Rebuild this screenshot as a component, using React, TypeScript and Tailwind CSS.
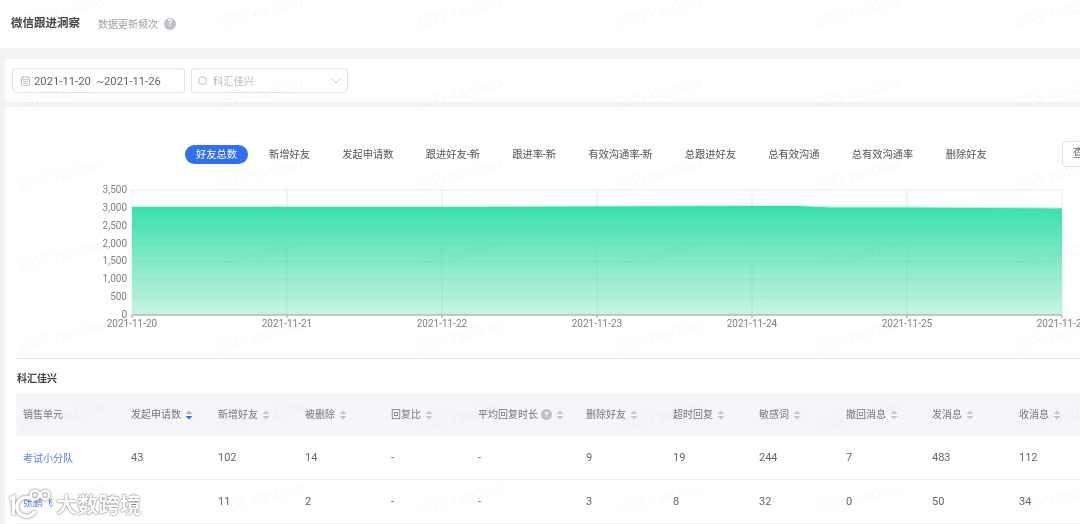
const cols = "grid grid-cols-[108px_87px_87px_86px_87px_108px_87px_86px_87px_86px_87px_87px]";

const tabs = ["新增好友", "发起申请数", "跟进好友-新", "跟进率-新", "有效沟通率-新", "总跟进好友", "总有效沟通", "总有效沟通率", "删除好友"];

const headers = [
  { label: "发起申请数", active: true },
  { label: "新增好友" },
  { label: "被删除" },
  { label: "回复比" },
  { label: "平均回复时长", help: true },
  { label: "删除好友" },
  { label: "超时回复" },
  { label: "敏感词" },
  { label: "撤回消息" },
  { label: "发消息" },
  { label: "收消息" },
];

const rows = [
  ["考试小分队", "43", "102", "14", "-", "-", "9", "19", "244", "7", "483", "112"],
  ["张鹏飞", "5", "11", "2", "-", "-", "3", "8", "32", "0", "50", "34"],
];

const yTicks = [3500, 3000, 2500, 2000, 1500, 1000, 500, 0];
const xTicks = ["2021-11-20", "2021-11-21", "2021-11-22", "2021-11-23", "2021-11-24", "2021-11-25", "2021-11-26"];

function SortIcon({ active }: { active?: boolean }) {
  return (
    <svg width="8" height="10" viewBox="0 0 8 10" className="shrink-0">
      <path d="M4 0.5 7.5 4H0.5z" fill={active ? "#a9b4c8" : "#c4c6cc"} />
      <path d="M4 9.5 7.5 6H0.5z" fill={active ? "#3370ff" : "#c4c6cc"} />
    </svg>
  );
}

function HelpDot({ size }: { size: string }) {
  return (
    <span className={`${size} rounded-full bg-[#c0c0c6] text-white font-bold flex items-center justify-center shrink-0`}>?</span>
  );
}

function AreaChart() {
  const top = 190;
  const bottom = 315;
  const xs = [132, 287, 442, 597, 752, 907, 1062];
  return (
    <svg width="1080" height="145" viewBox="0 184 1080 145" className="block">
      <defs>
        <linearGradient id="area" x1="0" y1="0" x2="0" y2="1">
          <stop offset="0" stopColor="#38e0ad" />
          <stop offset="1" stopColor="#c9f4e0" />
        </linearGradient>
      </defs>
      <rect x="132" y={top} width="930" height="125" fill="none" stroke="#e8ebf2" />
      <path d="M132 206.5 L442 206.5 L597 206 L752 205.5 L797 205.5 L830 207 L907 207 L1062 208 V315 H132 Z" fill="url(#area)" />
      <path d="M132 206.5 L442 206.5 L597 206 L752 205.5 L797 205.5 L830 207 L907 207 L1062 208" fill="none" stroke="#c5f5e4" />
      {yTicks.slice(1, -1).map((t, i) => (
        <line key={t} x1="132" x2="1062" y1={207.9 + i * 17.86} y2={207.9 + i * 17.86} stroke="#2fb98f" strokeOpacity="0.1" />
      ))}
      {xs.slice(1, -1).map((x) => (
        <line key={x} x1={x} x2={x} y1={top} y2={bottom} stroke="#8fb8c0" strokeOpacity="0.3" />
      ))}
      <line x1="132" x2="1062" y1={bottom} y2={bottom} stroke="#b5b8bb" strokeWidth="1.5" />
      {xs.map((x) => (
        <line key={x} x1={x} x2={x} y1={bottom} y2={bottom + 3} stroke="#9a9da1" />
      ))}
      {yTicks.map((t, i) => (
        <text key={t} x="127" y={top + i * 17.86 + 3} textAnchor="end" fontSize="10" fill="#808080">
          {t.toLocaleString("en-US")}
        </text>
      ))}
      {xTicks.map((t, i) => (
        <text key={t} x={xs[i]} y="327" textAnchor="middle" fontSize="10" fill="#808080">
          {t}
        </text>
      ))}
    </svg>
  );
}

export default function App() {
  return (
    <div className="relative h-[524px] w-[1080px] overflow-hidden bg-[#f2f3f5] font-['Roboto','Noto_Sans_CJK_SC',sans-serif] text-[#666] blur-[0.3px]">
      {/* Header */}
      <div className="flex h-[48px] items-center bg-white pl-[11px]">
        <h1 className="text-[11.5px] font-semibold text-[#444]">微信跟进洞察</h1>
        <span className="ml-[18px] text-[10px] text-[#a0a0a0]">数据更新频次</span>
        <HelpDot size="ml-[6px] h-[12px] w-[12px] text-[9px]" />
      </div>

      {/* Filters */}
      <div className="ml-[5px] mt-[11px] flex h-[43px] items-center gap-[6px] rounded-l-[4px] bg-white pl-[7px]">
        <div className="flex h-[25px] w-[173px] items-center rounded-[3px] border border-[#e3e4e8] pl-[8px] text-[11.25px] text-[#666]">
          <svg width="9" height="10" viewBox="0 0 9 10" fill="none" stroke="#bdbdc2" strokeWidth="0.9" className="mr-[4px]">
            <rect x="0.5" y="1.2" width="8" height="8.2" rx="0.6" />
            <path d="M0.5 3.6h8M2 5.5h5M2 7.3h5M2.5 0v2M6.5 0v2" />
          </svg>
          <span className="whitespace-pre pt-[3px]">2021-11-20  ~2021-11-26</span>
        </div>
        <div className="flex h-[25px] w-[157px] items-center rounded-[3px] border border-[#e3e4e8] pl-[6px] text-[10.25px] text-[#b8b8bc]">
          <svg width="10" height="10" viewBox="0 0 10 10" fill="none" stroke="#b8b8bc" strokeWidth="0.9" className="mr-[5px]">
            <circle cx="4.6" cy="4.6" r="3.9" />
            <path d="M7.5 7.5 9.4 9.4" />
          </svg>
          <span className="pt-[2px]">科汇佳兴</span>
          <svg width="10" height="6" viewBox="0 0 10 6" fill="none" stroke="#c2c2c6" strokeWidth="0.9" className="ml-[77px]">
            <path d="M1 1l4 4 4-4" />
          </svg>
        </div>
      </div>

      {/* Main card */}
      <div className="ml-[5px] mt-[5px] h-[417px] rounded-tl-[4px] bg-white">
        <div className="flex h-[38px] items-start pl-[180px] pt-[38px]">
          <span className="flex h-[19px] shrink-0 items-center whitespace-nowrap rounded-full bg-[#3370f0] px-[11px] text-[10.25px] text-white">好友总数</span>
          <div className="ml-[10px] flex h-[19px] shrink-0 items-center gap-[10.25px] text-[10.25px] text-[#555]">
            {tabs.map((t) => (
              <span key={t} className="whitespace-nowrap px-[11px]">{t}</span>
            ))}
          </div>
          <span className="-mt-[4px] ml-[64px] flex h-[26px] w-[40px] shrink-0 items-center whitespace-nowrap rounded-[3px] border border-[#e3e4e8] pl-[10px] text-[11px] text-[#666]">查看</span>
        </div>

        <div className="mt-[39px] -ml-[5px] w-[1080px]">
          <AreaChart />
        </div>

        <div className="ml-[11px] mt-[29px] border-t border-[#e4e5e8]">
          <h2 className="pt-[14px] pl-[1px] text-[10px] font-semibold leading-[12px] text-[#444]">科汇佳兴</h2>
          <div className={`${cols} mt-[8px] h-[43px] w-max items-center rounded-tl-[4px] bg-[#f5f5fa] text-[10px] text-[#777]`}>
            <div className="pl-[7px]">销售单元</div>
            {headers.map((h) => (
              <div key={h.label} className="flex items-center gap-[4px] pl-[7px]">
                <span className="whitespace-nowrap">{h.label}</span>
                {h.help && <HelpDot size="h-[11px] w-[11px] text-[8px] -ml-[1px]" />}
                <SortIcon active={h.active} />
              </div>
            ))}
          </div>
          {rows.map((r) => (
            <div key={r[0]} className={`${cols} h-[44px] w-max items-center border-b border-[#eeeef2] pt-[2px] text-[11px] text-[#666]`}>
              {r.map((c, i) => (
                <div key={i} className={i === 0 ? "pl-[7px] text-[10px] text-[#5a7fdc]" : "pl-[7px]"}>{c}</div>
              ))}
            </div>
          ))}
        </div>
      </div>

      {/* Watermark */}
      <div className="pointer-events-none absolute left-[15px] top-[-42px] grid grid-cols-[repeat(6,199px)] auto-rows-[81px]">
        {Array.from({ length: 42 }, (_, i) => (
          <span key={i} className="flex h-[81px] origin-center -rotate-[15deg] items-center whitespace-nowrap pl-[2px] text-[14.5px] text-[#8a8a8a]/[0.05]">
            闫巧 YanQiao
          </span>
        ))}
      </div>

      {/* Publisher mark */}
      <div className="pointer-events-none absolute bottom-[6px] left-[9px] flex items-end">
        <svg width="43" height="30" viewBox="0 0 43 30" fill="none" stroke="#fff" strokeWidth="3.6" className="[filter:drop-shadow(0_0_1px_#666)]">
          <path d="M1 11 4.5 9V27" />
          <path d="M25 13a9.5 9.5 0 1 0 1 10" />
          <circle cx="26" cy="7" r="4.4" strokeWidth="2.6" />
          <circle cx="36" cy="7" r="4.2" strokeWidth="2.6" />
        </svg>
        <span className="mb-[2px] ml-[4px] text-[21px] font-bold leading-none tracking-[0.3px] text-white [text-shadow:0_0_1px_#666,0_0_2px_#888]">大数跨境</span>
      </div>
    </div>
  );
}
